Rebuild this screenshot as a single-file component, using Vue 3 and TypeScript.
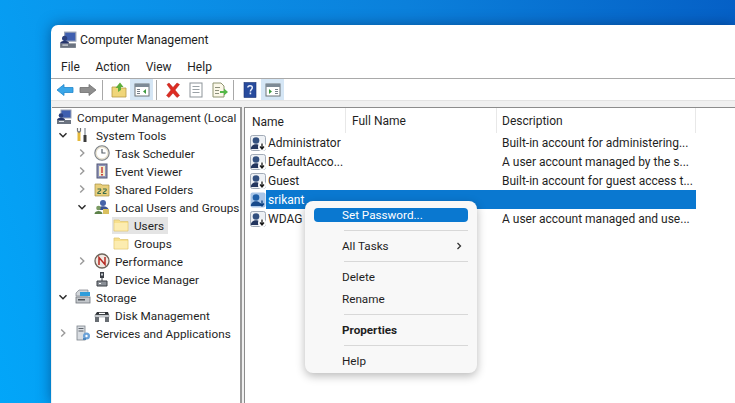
<script setup lang="ts">
interface TreeRow { label: string; depth: number; arrow: '' | 'open' | 'closed'; icon: string; selected?: boolean }
const menus = ['File', 'Action', 'View', 'Help']
const tree: TreeRow[] = [
  { label: 'Computer Management (Local', depth: 0, arrow: '', icon: 'pc' },
  { label: 'System Tools', depth: 1, arrow: 'open', icon: 'tools' },
  { label: 'Task Scheduler', depth: 2, arrow: 'closed', icon: 'clock' },
  { label: 'Event Viewer', depth: 2, arrow: 'closed', icon: 'event' },
  { label: 'Shared Folders', depth: 2, arrow: 'closed', icon: 'share' },
  { label: 'Local Users and Groups', depth: 2, arrow: 'open', icon: 'users' },
  { label: 'Users', depth: 3, arrow: '', icon: 'folder', selected: true },
  { label: 'Groups', depth: 3, arrow: '', icon: 'folder' },
  { label: 'Performance', depth: 2, arrow: 'closed', icon: 'perf' },
  { label: 'Device Manager', depth: 2, arrow: '', icon: 'device' },
  { label: 'Storage', depth: 1, arrow: 'open', icon: 'storage' },
  { label: 'Disk Management', depth: 2, arrow: '', icon: 'disk' },
  { label: 'Services and Applications', depth: 1, arrow: 'closed', icon: 'services' },
]
const users = [
  { name: 'Administrator', desc: 'Built-in account for administering...' },
  { name: 'DefaultAcco...', desc: 'A user account managed by the s...' },
  { name: 'Guest', desc: 'Built-in account for guest access t...' },
  { name: 'srikant', desc: '', selected: true },
  { name: 'WDAG', desc: 'A user account managed and use...' },
]
</script>

<template>
  <div class="desktop">
    <div class="window">
      <div class="titlebar">
        <svg class="ico" viewBox="0 0 16 16"><use href="#i-pc" /></svg>
        <span>Computer Management</span>
      </div>
      <div class="menubar">
        <span v-for="m in menus" :key="m">{{ m }}</span>
      </div>
      <div class="toolbar">
        <span class="tb"><svg viewBox="0 0 18 18"><path d="M1 9l7-5.500v3h9v5H8v3z" fill="#3aa6e8" stroke="#1f86cc" stroke-width=".8" /></svg></span>
        <span class="tb"><svg viewBox="0 0 18 18"><path d="M17 9l-7-5.500v3H1v5h9v3z" fill="#8e8e8e" stroke="#707070" stroke-width=".8" /></svg></span>
        <i class="sep"></i>
        <span class="tb"><svg viewBox="0 0 18 18"><path d="M2 6h5l1 1h8v9H2z" fill="#f0d67a" stroke="#b79a45" stroke-width=".8" /><path d="M8 11V7H5.500L10 1.500 13.500 6H11v3z" fill="#5fae3a" /></svg></span>
        <span class="tb on"><svg viewBox="0 0 18 18"><rect x="2" y="3" width="14" height="12" fill="#fff" stroke="#6f7478" /><rect x="2" y="3" width="14" height="3" fill="#7d8a96" /><path d="M4 8h3v1H4zM4 10h3v1H4zM4 12h3v1H4z" fill="#77808a" /><path d="M13 8v5l-3-2.500z" fill="#3f9a3f" /></svg></span>
        <i class="sep"></i>
        <span class="tb"><svg viewBox="0 0 18 18"><path d="M3 3.500L5 2l4 4.500L13 2l2.500 1.500L11 9l4.500 5.500L13 16.500 9 12l-4 4.500L2.500 14.500 7 9z" fill="#dd2c22" stroke="#b51d16" stroke-width=".5" /></svg></span>
        <span class="tb"><svg viewBox="0 0 18 18"><rect x="3" y="2" width="12" height="14" fill="#fff" stroke="#8d9499" /><path d="M5.500 5h7v1h-7zM5.500 8h7v1h-7zM5.500 11h7v1h-7z" fill="#9aa1a6" /></svg></span>
        <span class="tb"><svg viewBox="0 0 18 18"><path d="M3 2h8l3 3v11H3z" fill="#fbf8e9" stroke="#8f9470" /><path d="M5 6h5v1H5zM5 9h4v1H5zM5 12h4v1H5z" fill="#8b8f7b" /><path d="M10 10h4V7.500l4 3.500-4 3.500V12h-4z" fill="#54b848" /></svg></span>
        <i class="sep"></i>
        <span class="tb"><svg viewBox="0 0 18 18"><rect x="3" y="1.500" width="12" height="15" fill="#274b9d" stroke="#1c3474" stroke-width=".6" /><path d="M6.800 6.500C7 4 11.400 4 11.300 6.700 11.200 8.500 9.400 8.500 9.400 10.500" fill="none" stroke="#e9eefb" stroke-width="1.500" /><rect x="8.600" y="11.500" width="1.600" height="1.800" fill="#e9eefb" /></svg></span>
        <span class="tb on"><svg viewBox="0 0 18 18"><rect x="2" y="3" width="14" height="12" fill="#fff" stroke="#6f7478" /><rect x="2" y="3" width="14" height="3" fill="#7d8a96" /><path d="M11 8h3v1h-3zM11 10h3v1h-3zM11 12h3v1h-3z" fill="#77808a" /><path d="M5 8v5l3-2.500z" fill="#3f9a3f" /></svg></span>
      </div>
      <div class="panes">
        <div class="tree">
          <div v-for="r in tree" :key="r.label" class="trow" :class="'d' + r.depth">
            <span class="arrow">
              <svg v-if="r.arrow === 'open'" viewBox="0 0 10 10"><path d="M1.500 3.200L5 6.800l3.500-3.600" /></svg>
              <svg v-else-if="r.arrow === 'closed'" viewBox="0 0 10 10"><path d="M3.200 1.500L6.800 5 3.200 8.500" class="lite" /></svg>
            </span>
            <span class="item" :class="{ sel: r.selected }">
              <svg class="ico" viewBox="0 0 16 16"><use :href="'#i-' + r.icon" /></svg>
              <span class="tlabel">{{ r.label }}</span>
            </span>
          </div>
        </div>
        <div class="list">
          <div class="lhead">
            <span class="c1">Name</span>
            <span class="c2">Full Name</span>
            <span class="c3">Description</span>
          </div>
          <div v-for="u in users" :key="u.name" class="lrow" :class="{ sel: u.selected }">
            <span class="c1 cell">
              <svg class="ico" viewBox="0 0 16 16"><use :href="u.selected ? '#i-user-sel' : '#i-user'" /></svg>
              <span class="uname">{{ u.name }}</span>
            </span>
            <span class="c2"></span>
            <span class="c3">{{ u.desc }}</span>
          </div>
          <div class="menu">
            <div class="mi hot"><span>Set Password...</span></div>
            <div class="msep"></div>
            <div class="mi"><span>All Tasks</span><svg viewBox="0 0 10 10"><path d="M3.500 2L6.500 5 3.500 8" /></svg></div>
            <div class="msep"></div>
            <div class="mi"><span>Delete</span></div>
            <div class="mi"><span>Rename</span></div>
            <div class="msep"></div>
            <div class="mi b"><span>Properties</span></div>
            <div class="msep"></div>
            <div class="mi"><span>Help</span></div>
          </div>
        </div>
      </div>
    </div>
    <svg class="defs" width="0" height="0">
      <defs>
        <symbol id="i-pc" viewBox="0 0 16 16">
          <rect x="5" y="1" width="10" height="8" fill="#3f5fb0" stroke="#9aa2b4" />
          <path d="M1 11h14v4H1z" fill="#6b7380" /><path d="M3 12h5v1H3z" fill="#e2e6ec" />
          <circle cx="5" cy="6.500" r="2.300" fill="#2a3f7e" /><path d="M1 11c0-3 8-3 8 0z" fill="#26356b" />
        </symbol>
        <symbol id="i-tools" viewBox="0 0 16 16">
          <path d="M4 5v9" stroke="#e4b93a" stroke-width="3" /><path d="M2.500 1v3l1.500 1.500L5.500 4V1" fill="none" stroke="#777" stroke-width="1.200" />
          <path d="M10 1v8" stroke="#aab0b6" stroke-width="1.800" /><path d="M10 8v7" stroke="#3b3b3b" stroke-width="3" />
        </symbol>
        <symbol id="i-clock" viewBox="0 0 16 16">
          <circle cx="8" cy="8" r="7.200" fill="#e6e0cf" stroke="#7d8288" stroke-width="1.100" /><circle cx="8" cy="8" r="5.300" fill="#fff" />
          <path d="M8 4v4h3.500" fill="none" stroke="#58606a" stroke-width="1.200" />
        </symbol>
        <symbol id="i-event" viewBox="0 0 16 16">
          <rect x="3" y="1" width="10" height="14" fill="#8f93b8" stroke="#555a78" /><rect x="5" y="3" width="6" height="10" fill="#f3eccd" />
          <path d="M8 4v6" stroke="#c8403a" stroke-width="1.500" /><rect x="7" y="11" width="2" height="1.500" fill="#c8403a" />
        </symbol>
        <symbol id="i-share" viewBox="0 0 16 16">
          <path d="M1 3h6l1 1h7v11H1z" fill="#e9cf7c" stroke="#a88f43" stroke-width=".7" />
          <path d="M3.500 8h3.500M3.500 12.500c0-2 3.500-2 3.500-4M9 8h3.500M9 12.500c0-2 3.500-2 3.500-4M3.500 12.500h3.500M9 12.500h3.500" fill="none" stroke="#3d6d4d" stroke-width="1.100" />
        </symbol>
        <symbol id="i-users" viewBox="0 0 16 16">
          <circle cx="9" cy="4" r="3" fill="#4763a8" /><path d="M3.500 11c0-5 11-5 11 0z" fill="#3c5291" />
          <circle cx="4.500" cy="9" r="2.300" fill="#7b9b63" /><path d="M.5 15c0-4 8-4 8 0z" fill="#5c8148" />
          <rect x="9" y="10" width="6" height="5" fill="#d9c05f" />
        </symbol>
        <symbol id="i-folder" viewBox="0 0 16 16">
          <path d="M1 3h5l1.500 1.500H15V14H1z" fill="#f8e08c" stroke="#e0c878" stroke-width=".8" /><path d="M1.500 6h13v7.500h-13z" fill="#fcecb0" />
        </symbol>
        <symbol id="i-perf" viewBox="0 0 16 16">
          <circle cx="8" cy="8" r="7" fill="#f1e8e1" stroke="#6b6258" stroke-width="1.300" />
          <path d="M5 12V4.500l6 7V4" fill="none" stroke="#b62a22" stroke-width="1.500" />
        </symbol>
        <symbol id="i-device" viewBox="0 0 16 16">
          <rect x="6" y="1" width="4" height="6" fill="#3c4047" /><rect x="7" y="2.500" width="2" height="2" fill="#c7cdd3" />
          <path d="M8 7v3M3 10h10v5H3z" fill="#8a8f96" stroke="#3c4047" /><path d="M5 12h2v1H5z" fill="#fff" />
        </symbol>
        <symbol id="i-storage" viewBox="0 0 16 16">
          <path d="M1 4l3-3h9v6H1z" fill="#d2d6da" stroke="#7b8087" stroke-width=".7" /><rect x="5" y="3" width="10" height="4" fill="#2e9ddb" />
          <rect x="1" y="8" width="14" height="6" fill="#c3c7cb" stroke="#6f747b" stroke-width=".8" /><rect x="3" y="10" width="7" height="1.500" fill="#4d5258" />
        </symbol>
        <symbol id="i-disk" viewBox="0 0 16 16">
          <path d="M3 5h11l1 3H1z" fill="#2f3236" /><rect x="5" y="5.800" width="6" height="1.200" fill="#fff" />
          <rect x="1" y="8" width="14" height="2" fill="#e1e4e7" stroke="#767b81" stroke-width=".5" /><path d="M1 10h4v5H1zM11 10h4v5h-4z" fill="#686d73" />
        </symbol>
        <symbol id="i-services" viewBox="0 0 16 16">
          <rect x="2" y="1" width="8" height="14" fill="#d9dde2" stroke="#7c838b" stroke-width=".8" /><path d="M3.500 3.500h5M3.500 6h5" stroke="#5e656d" />
          <circle cx="11.500" cy="11" r="3.500" fill="#6ba2d8" /><circle cx="11.500" cy="11" r="1.200" fill="#fff" /><rect x="8" y="13" width="3" height="2" fill="#4f87be" />
        </symbol>
        <symbol id="i-user" viewBox="0 0 16 16">
          <rect x="0.500" y="0.500" width="15" height="15" rx="2" fill="#eef1f5" stroke="#8d97a6" stroke-width=".8" />
          <circle cx="6" cy="5.500" r="3.300" fill="#33507f" /><path d="M.8 14c0-6.500 10.400-6.500 10.400 0z" fill="#23365f" />
          <circle cx="12" cy="12" r="4" fill="#fff" /><path d="M12 8.500V13M10 11.500l2 2.500 2-2.500" fill="none" stroke="#1a1a1a" stroke-width="1.300" />
        </symbol>
        <symbol id="i-user-sel" viewBox="0 0 16 16">
          <rect x="0.500" y="0.500" width="15" height="15" rx="2" fill="#a9c6e8" />
          <circle cx="6" cy="5.500" r="3.300" fill="#1f5fa8" /><path d="M.8 14c0-6.500 10.400-6.500 10.400 0z" fill="#184a8c" />
          <path d="M12 8.500V13M10 11.500l2 2.500 2-2.500" fill="none" stroke="#0b3f80" stroke-width="1.300" />
        </symbol>
      </defs>
    </svg>
  </div>
</template>

<style>
html, body { margin: 0; padding: 0; overflow: hidden; }
</style>

<style scoped>
.desktop {
  width: 735px; height: 403px; overflow: hidden; box-sizing: border-box;
  padding: 25px 0 0 51px;
  background: linear-gradient(72deg, #02a6f9 0%, #0a96ec 25%, #0b80db 62%, #0560c6 100%);
  font-family: Roboto, "Liberation Sans", sans-serif;
  font-size: 12px; color: #1f1f1f;
}
.defs { position: absolute; }
.window {
  width: 684px; height: 378px; background: #fff;
  border-radius: 7px 0 0 0; display: flex; flex-direction: column;
  box-shadow: 0 0 14px rgba(0, 30, 80, .5);
}
.ico { width: 16px; height: 16px; flex: none; }
.titlebar { height: 30px; flex: none; display: flex; align-items: center; gap: 3px; padding-left: 8px; font-size: 12.200px; }
.titlebar .ico { width: 18px; height: 18px; }
.menubar { height: 20px; flex: none; padding: 2px 0 1px 10px; box-sizing: content-box; display: flex; align-items: center; gap: 15.700px; border-bottom: 1px solid #a9a9a9; }
.toolbar { height: 21px; flex: none; display: flex; align-items: center; padding-left: 2px; border-bottom: 1px solid #e3e3e3; }
.tb { width: 23px; height: 21px; display: flex; align-items: center; justify-content: center; }
.tb svg { width: 18px; height: 18px; }
.tb.on { background: #d5e6f5; }
.sep { width: 1px; height: 20px; background: #a8a8a8; margin: 0 4px 0 3px; }
.panes { flex: 1; display: flex; min-height: 0; background: #f0f0f0; padding: 6px 0 0 1px; }
.tree {
  width: 190px; flex: none; background: #fff; box-sizing: border-box;
  border-top: 1px solid #8c8c8c; border-right: 2px solid #9a9a9a; overflow: hidden;
  font-size: 11.750px;
}
.trow { height: 18px; display: flex; align-items: center; white-space: nowrap; }
.d0 { padding-left: 3px; }
.d1 { padding-left: 4px; }
.d2 { padding-left: 23px; }
.d3 { padding-left: 42px; }
.arrow { width: 14px; margin-right: 4px; height: 16px; display: flex; align-items: center; justify-content: center; flex: none; }
.d0 .arrow { display: none; }
.arrow svg { width: 10px; height: 10px; }
.arrow path { fill: none; stroke: #2a2a2a; stroke-width: 1.400; }
.arrow path.lite { stroke: #9a9a9a; }
.item { display: flex; align-items: center; gap: 5px; height: 17px; padding: 0 4px 0 1px; }
.tlabel { padding-top: 2px; }
.item.sel { background: #e4e4e4; }
.list { flex: 1; margin-left: 2px; background: #fff; border-top: 1px solid #8c8c8c; border-left: 1px solid #8c8c8c; position: relative; min-width: 0; }
.lhead { height: 25px; display: flex; align-items: center; }
.c1 { width: 100px; flex: none; box-sizing: border-box; padding-left: 7px; }
.c2 { width: 151px; flex: none; box-sizing: border-box; padding-left: 6px; align-self: stretch; }
.c3 { width: 200px; flex: none; box-sizing: border-box; padding-left: 6px; white-space: nowrap; align-self: stretch; }
.lhead .c1 { padding-top: 2px; }
.lhead .c2, .lhead .c3 { border-left: 1px solid #e8e8e8; line-height: 27px; }
.lhead .c3 { border-right: 1px solid #e8e8e8; padding-left: 5px; }
.lrow { height: 19px; display: flex; align-items: center; white-space: nowrap; line-height: 21px; }
.cell { display: flex; align-items: center; padding-left: 5px; align-self: stretch; }
.uname { padding-left: 2px; flex: 1; align-self: stretch; }
.lrow.sel { color: #fff; }
.lrow.sel .uname, .lrow.sel .c2, .lrow.sel .c3 { background: #0a78d0; }
.menu {
  position: absolute; left: 60px; top: 93px; width: 172px; height: 172px; box-sizing: border-box;
  background: #f8f8f8; border-radius: 8px; padding-top: 7px;
  box-shadow: 0 3px 10px rgba(0, 0, 0, .28); font-size: 11.700px;
}
.mi { height: 22px; margin: 0 9px; display: flex; align-items: center; justify-content: space-between; padding: 0 4px 0 28px; line-height: 24px; }
.mi svg { width: 10px; height: 10px; }
.mi path { fill: none; stroke: #333; stroke-width: 1.300; }
.mi.hot { height: 14px; background: #0a78d0; color: #fff; border-radius: 4px; margin-bottom: 8px; line-height: 16px; }
.mi.b { font-weight: 700; }
.msep { height: 1px; margin: 4px 9px 4px 39px; background: #d8d8d8; }
</style>
